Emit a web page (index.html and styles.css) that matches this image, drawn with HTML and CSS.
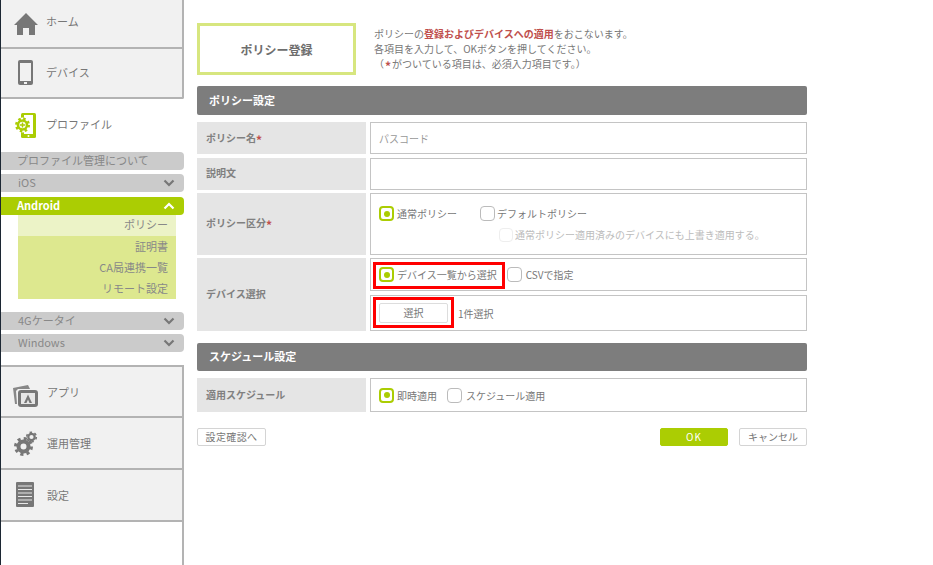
FILE: index.html
```html
<!DOCTYPE html>
<html lang="ja">
<head>
<meta charset="utf-8">
<title>ポリシー登録</title>
<link rel="stylesheet" href="styles.css">
</head>
<body>
<div class="app">
  <nav class="side">
    <a class="nav nav-first">
      <svg class="ico" viewBox="0 0 26 24"><path fill="#777" d="M13 1 L25 13 L22 13 L22 23 L16 23 L16 16 L10 16 L10 23 L4 23 L4 13 L1 13 Z"/></svg>
      <span>ホーム</span>
    </a>
    <a class="nav nav-last">
      <svg class="ico" viewBox="0 0 26 26"><rect x="5" y="0" width="15" height="25" rx="2" fill="#777"/><rect x="7" y="3" width="11" height="18" fill="#f1f1f1"/><rect x="11" y="22" width="3" height="2" fill="#f1f1f1"/></svg>
      <span>デバイス</span>
    </a>
    <a class="nav-active">
      <svg class="ico" viewBox="0 0 26 26"><rect x="8" y="1" width="15" height="25" rx="1.500" fill="#abcd03"/><rect x="11" y="3" width="9" height="19" fill="#fff"/><circle cx="15.500" cy="24" r="1" fill="#fff"/><circle cx="9.500" cy="13" r="7.500" fill="#fff"/><circle cx="9.500" cy="13" r="4.500" fill="#fff" stroke="#abcd03" stroke-width="2.600"/><circle cx="9.500" cy="13" r="6.200" fill="none" stroke="#abcd03" stroke-width="2.600" stroke-dasharray="2.430 2.430"/><path d="M9.500 10.500v5M7 13h5" stroke="#abcd03" stroke-width="1.500"/></svg>
      <span>プロファイル</span>
    </a>
    <div class="bar bar-about"><span>プロファイル管理について</span></div>
    <div class="bar bar-ios"><span>iOS</span><svg class="chev" viewBox="0 0 12 8"><path d="M1.500 1.500 6 6l4.500-4.500" fill="none" stroke="#777" stroke-width="2.200"/></svg></div>
    <div class="bar bar-on"><span>Android</span><svg class="chev" viewBox="0 0 12 8"><path d="M1.500 6.500 6 2l4.500 4.500" fill="none" stroke="#fff" stroke-width="2.200"/></svg></div>
    <ul class="sub">
      <li class="sub-on">ポリシー</li>
      <li>証明書</li>
      <li>CA局連携一覧</li>
      <li>リモート設定</li>
    </ul>
    <div class="bar bar-4g"><span>4Gケータイ</span><svg class="chev" viewBox="0 0 12 8"><path d="M1.500 1.500 6 6l4.500-4.500" fill="none" stroke="#777" stroke-width="2.200"/></svg></div>
    <div class="bar bar-win"><span>Windows</span><svg class="chev" viewBox="0 0 12 8"><path d="M1.500 1.500 6 6l4.500-4.500" fill="none" stroke="#777" stroke-width="2.200"/></svg></div>
    <a class="nav nav-top nav-b">
      <svg class="ico ico-app" viewBox="0 0 26 26"><path fill="#888" d="M0 5 L15 2 L17 6 L5 6 L3 8 L4 21 L2 21 Z"/><rect x="5" y="7" width="20" height="17" rx="3" fill="#777"/><rect x="8" y="10" width="14" height="11" fill="#e6e6e6"/><path d="M11 20 15 11.500 19 20h-2.500L15 16.500 13.500 20Z" fill="#777"/></svg>
      <span>アプリ</span>
    </a>
    <a class="nav nav-b">
      <svg class="ico" viewBox="0 0 26 26"><g fill="none" stroke="#777"><circle cx="10.500" cy="16.500" r="5" stroke-width="4"/><circle cx="10.500" cy="16.500" r="8" stroke-width="3" stroke-dasharray="3.140 3.140"/><circle cx="18.500" cy="7" r="3.200" stroke-width="2.200"/><circle cx="18.500" cy="7" r="4.800" stroke-width="1.600" stroke-dasharray="2.510 2.510"/></g></svg>
      <span>運用管理</span>
    </a>
    <a class="nav nav-b">
      <svg class="ico" viewBox="0 0 26 26"><rect x="3" y="0" width="18" height="25" rx="1" fill="#777"/><path d="M5 4h14M5 7.500h14M5 11h14M5 14.500h14M5 18h14M5 21.500h10" stroke="#e8e8e8" stroke-width="1"/></svg>
      <span>設定</span>
    </a>
    <div class="side-rest"></div>
  </nav>
  <main class="main">
    <header class="head">
      <h1 class="title">ポリシー登録</h1>
      <div class="lead">
        <p>ポリシーの<b class="em">登録およびデバイスへの適用</b>をおこないます。</p>
        <p>各項目を入力して、OKボタンを押してください。</p>
        <p>（<b class="ast ast-wide">*</b>がついている項目は、必須入力項目です。）</p>
      </div>
    </header>
    <h2 class="sect">ポリシー設定</h2>
    <div class="row row-name">
      <div class="lab">ポリシー名<b class="ast">*</b></div>
      <div class="val"><span class="ph">パスコード</span></div>
    </div>
    <div class="row row-desc">
      <div class="lab">説明文</div>
      <div class="val"></div>
    </div>
    <div class="row row-type">
      <div class="lab">ポリシー区分<b class="ast">*</b></div>
      <div class="val val-col">
        <div class="opts">
          <label class="opt"><i class="box on"></i>通常ポリシー</label>
          <label class="opt opt-wide"><i class="box"></i>デフォルトポリシー</label>
        </div>
        <label class="opt opt-dis"><i class="box box-dis"></i>通常ポリシー適用済みのデバイスにも上書き適用する。</label>
      </div>
    </div>
    <div class="row row-dev">
      <div class="lab">デバイス選択</div>
      <div class="dev-col">
        <div class="val val-a">
          <label class="opt"><i class="box on"></i>デバイス一覧から選択</label>
          <label class="opt opt-csv"><i class="box"></i>CSVで指定</label>
          <span class="mark mark-a"></span>
        </div>
        <div class="val val-b">
          <button class="btn btn-sel" type="button">選択</button>
          <span class="count">1件選択</span>
          <span class="mark mark-b"></span>
        </div>
      </div>
    </div>
    <h2 class="sect sect-2">スケジュール設定</h2>
    <div class="row row-sch">
      <div class="lab">適用スケジュール</div>
      <div class="val">
        <label class="opt"><i class="box on"></i>即時適用</label>
        <label class="opt opt-sch"><i class="box"></i>スケジュール適用</label>
      </div>
    </div>
    <div class="actions">
      <button class="btn btn-conf" type="button">設定確認へ</button>
      <div class="actions-r">
        <button class="btn btn-ok" type="button">OK</button>
        <button class="btn btn-can" type="button">キャンセル</button>
      </div>
    </div>
  </main>
</div>
</body>
</html>
```

FILE: styles.css
```css
* { box-sizing: border-box; }
html, body { margin: 0; height: 100%; background: #fff; }
body { font-family: "Noto Sans CJK JP", "Noto Sans", sans-serif; font-size: 10px; color: #777; overflow: hidden; }
h1, h2, p, ul { margin: 0; padding: 0; }
.app { display: flex; height: 565px; }

.side { width: 184px; height: 565px; flex: none; border-left: 1px solid #1c2733; display: flex; flex-direction: column; }
.nav, .nav-active { display: flex; align-items: center; font-size: 11px; color: #777; flex: none; }
.nav { height: 52px; background: #f1f1f1; border-bottom: 2px solid #b3b3b3; border-right: 2px solid #b3b3b3; padding-left: 12px; }
.nav-first span { padding-bottom: 6px; }
.nav-last span { padding-bottom: 2px; }
.nav-active span { padding-bottom: 1px; }
.nav-first { height: 49px; }
.nav-last { height: 50px; border-radius: 0 0 2px 0; }
.nav-active { height: 51px; padding-left: 12px; }
.nav-top { border-top: 2px solid #b3b3b3; margin-top: 13px; height: 53px; }
.nav-b span { padding-bottom: 1px; }
.nav-top span { padding-bottom: 0; }
.side-rest { flex: 1; border-right: 2px solid #b3b3b3; }
.ico { width: 26px; height: 26px; flex: none; margin-right: 7px; }
.nav-b .ico { margin-right: 8px; }
.ico-app { margin-top: 8px; }

.bar { display: flex; align-items: center; justify-content: space-between; flex: none; height: 18px; background: #cbcbcb; padding: 0 9px 0 17px; border-radius: 0 4px 4px 0; font-size: 11px; color: #888; }
.bar span { padding-bottom: 2px; }
.bar-about { margin-top: 2px; justify-content: flex-start; padding-left: 16px; }
.bar-ios { margin-top: 4px; }
.bar-on { margin-top: 5px; background: #abcd03; color: #fff; font-weight: 700; padding-left: 16px; }
.bar-4g { margin-top: 13px; }
.bar-win { margin-top: 4px; }
.chev { width: 12px; height: 8px; }

.sub { list-style: none; flex: none; margin-left: 17px; width: 158px; background: #dde88f; font-size: 11px; color: #888; }
.sub li { height: 21px; line-height: 20px; padding-right: 8px; text-align: right; }
.sub .sub-on { background: #ecf3c7; height: 21px; line-height: 18px; }

.main { width: 610px; margin-left: 13px; flex: none; display: flex; flex-direction: column; }
.head { display: flex; padding-top: 23px; }
.title { width: 159px; height: 52px; border: 3px solid #d7e67f; font-size: 12px; font-weight: 700; color: #6e6e6e; display: flex; align-items: center; justify-content: center; }
.lead { margin-left: 18px; padding-top: 3px; line-height: 15px; font-size: 10px; }
.lead p { height: 15px; }
.em { color: #c0504d; font-weight: 700; }
.ast { color: #c0504d; font-weight: 700; font-size: 12px; line-height: 1; }
.ast-wide { margin: 0 1px; vertical-align: -3px; }
.lab .ast { margin-top: 5px; }

.sect { margin-top: 11px; height: 29px; background: #7d7d7d; border-radius: 2px; color: #fff; font-size: 11px; font-weight: 700; padding: 0 0 2px 12px; display: flex; align-items: center; }
.sect-2 { margin-top: 12px; height: 28px; }

.row { display: flex; margin-bottom: 4px; }
.lab { width: 169px; flex: none; background: #e5e5e5; display: flex; align-items: center; padding: 0 0 2px 9px; font-weight: 700; color: #808080; }
.val { flex: 1; margin-left: 4px; border: 1px solid #c4c4c4; background: #fff; display: flex; align-items: center; padding-left: 8px; position: relative; }
.row-name { margin-top: 7px; height: 32px; }
.row-desc { height: 32px; margin-bottom: 3px; }
.row-desc .lab, .row-type .lab { padding-bottom: 3px; }
.row-type { height: 62px; margin-bottom: 3px; }
.row-dev { height: 73px; margin-bottom: 0; }
.row-sch { margin-top: 7px; height: 34px; margin-bottom: 0; }
.ph { color: #999; font-size: 10px; }

.val-col { flex-direction: column; align-items: flex-start; padding-top: 12px; }
.opts { display: flex; }
.opt { display: flex; align-items: center; color: #777; font-size: 10px; }
.opt-wide { margin-left: 23px; }
.opt-wide .box { margin-right: 2px; }
.opt-dis { color: #bcbcbc; margin-left: 120px; margin-top: 6px; }
.opt-csv { margin-left: 10px; }
.opt-sch { margin-left: 10px; }
.opt-csv .box, .opt-sch .box { margin-right: 4px; }
.box { display: block; width: 15px; height: 15px; border: 1px solid #bbb; border-radius: 4px; margin-right: 3px; background: #fff; flex: none; position: relative; }
.box.on { border: 2px solid #abcd03; }
.box.on::after { content: ""; position: absolute; left: 2.500px; top: 2.500px; width: 6px; height: 6px; border-radius: 50%; background: #abcd03; }
.box-dis { border-color: #eee; width: 14px; height: 14px; margin-right: 2px; }

.dev-col { flex: 1; display: flex; flex-direction: column; gap: 4px; }
.val-a { flex: none; height: 33px; }
.val-b { flex: none; height: 36px; }
.mark { position: absolute; border: 3px solid #f00; pointer-events: none; }
.mark-a { left: 2px; top: 3px; width: 132px; height: 27px; }
.mark-b { left: 2px; top: 1px; width: 81px; height: 31px; }

.btn { font: inherit; color: #777; background: #fff; border: 1px solid #d4d4d4; border-radius: 2px; padding: 0 0 2px; height: 18px; }
.btn-sel { width: 69px; height: 20px; border: 1px solid #ddd; }
.count { margin-left: 10px; }
.actions { margin-top: 16px; display: flex; justify-content: space-between; }
.actions-r { display: flex; gap: 11px; }
.btn-conf { width: 69px; letter-spacing: .4px; }
.btn-ok { width: 68px; background: #abcd03; border-color: #abcd03; color: #fff; letter-spacing: 1px; }
.btn-can { width: 68px; }
```
